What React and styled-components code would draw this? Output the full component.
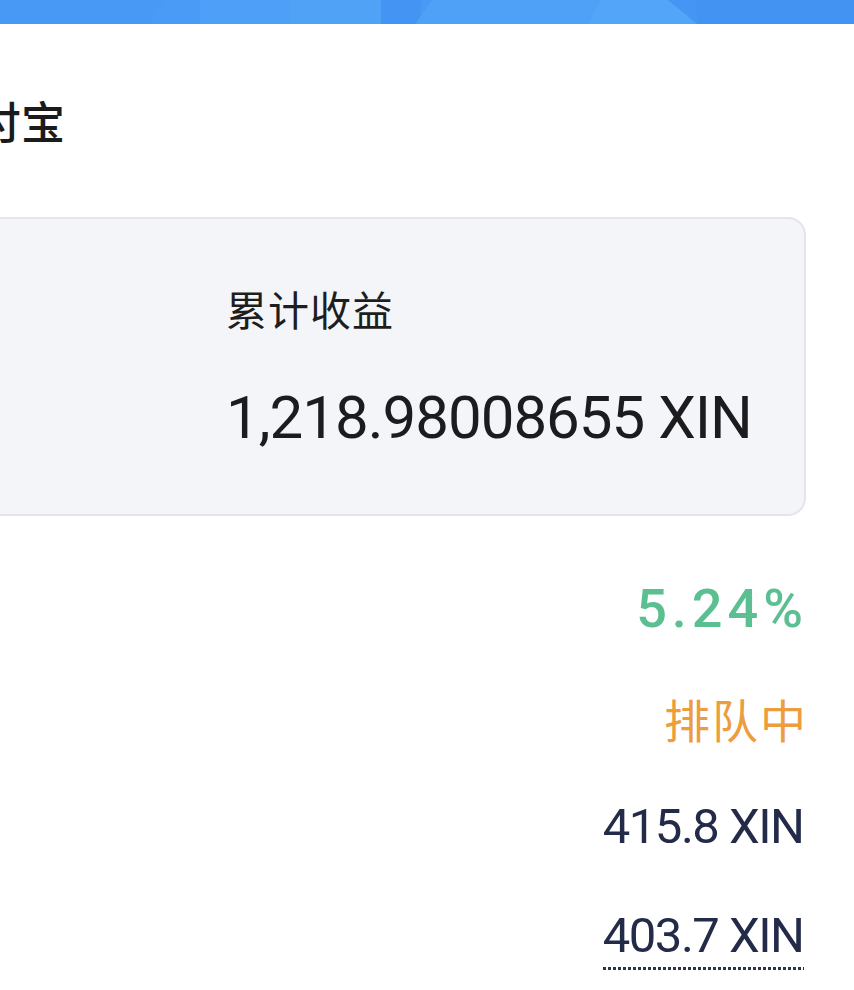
import styled, { createGlobalStyle } from "styled-components";

const GlobalStyle = createGlobalStyle`
  html, body {
    margin: 0;
    padding: 0;
    background: #ffffff;
    overflow: hidden;
  }
  body {
    font-family: "Noto Sans CJK SC", "Noto Sans", sans-serif;
    color: #1c1c1e;
  }
`;

// the capture shows the page scrolled sideways, its left part is off canvas
const SHIFT = 467;

const Root = styled.div`
  width: ${854 + SHIFT}px;
  margin-left: -${SHIFT}px;
`;

const Banner = styled.div`
  height: 24px;
  background: #4493f4;

  svg {
    display: block;
    width: 100%;
    height: 100%;
  }
`;

const Content = styled.main`
  padding: 74px 48px 0;
`;

const Title = styled.h1`
  margin: 0;
  font-size: 44px;
  line-height: 44px;
  font-weight: 500;
  color: #1b1b1b;
  white-space: nowrap;
`;

const Card = styled.section`
  margin-top: 75px;
  display: grid;
  grid-template-columns: 530px 1fr;
  column-gap: 65px;
  padding: 69px 48px 66px;
  background: #f4f5f9;
  border: 2px solid #e4e5ea;
  border-radius: 18px;
`;

const Stat = styled.div`
  display: flex;
  flex-direction: column;
  gap: 60px;
`;

const StatLabel = styled.span`
  font-size: 41px;
  line-height: 40px;
  letter-spacing: 1px;
  color: #1e1e20;
`;

const StatValue = styled.span`
  font-family: Roboto, "Noto Sans", sans-serif;
  font-size: 60px;
  line-height: 60px;
  letter-spacing: -1px;
  color: #1c1c1e;
  white-space: nowrap;
`;

const Rows = styled.div`
  margin-top: 38px;
`;

const Row = styled.div`
  height: 109px;
  display: flex;
  align-items: center;
  justify-content: space-between;
`;

const RowLabel = styled.span`
  font-size: 40px;
  color: #8a8d99;
`;

const tones = {
  green: "#5cbf92",
  orange: "#ec9d3e",
  navy: "#232b48",
};

const Value = styled.span`
  font-family: ${({ $cjk }) =>
    $cjk ? `"Noto Sans CJK SC", sans-serif` : `Roboto, "Noto Sans", sans-serif`};
  font-size: ${({ $size }) => $size}px;
  line-height: ${({ $size }) => $size}px;
  font-weight: ${({ $bold }) => ($bold ? 500 : 400)};
  letter-spacing: ${({ $spacing }) => $spacing}px;
  margin-right: ${({ $trim }) => $trim}px;
  color: ${({ $tone }) => tones[$tone]};
  white-space: nowrap;
`;

const DottedValue = styled(Value)`
  padding-bottom: 10px;
  margin-bottom: -10px;
  background-image: linear-gradient(to right, #2a3350 60%, transparent 0);
  background-size: 5px 3px;
  background-repeat: repeat-x;
  background-position: left bottom;
`;

function BannerArt() {
  const o = SHIFT;
  return (
    <svg viewBox={`0 0 ${854 + SHIFT} 24`} preserveAspectRatio="none">
      <defs>
        <linearGradient id="bn" x1="0" x2="1" y1="0" y2="0">
          <stop offset="0" stopColor="#4493f4" />
          <stop offset="0.6" stopColor="#4a9bf6" />
          <stop offset="1" stopColor="#4292f3" />
        </linearGradient>
      </defs>
      <rect width={854 + SHIFT} height="24" fill="url(#bn)" />
      <polygon points={`${o + 150},24 ${o + 166},0 ${o + 290},0 ${o + 290},24`} fill="#4a9bf6" />
      <rect x={o + 200} y="0" width="90" height="24" fill="#4d9ff7" />
      <rect x={o + 290} y="0" width="91" height="24" fill="#50a2f7" />
      <rect x={o + 381} y="0" width="40" height="24" fill="#4494f4" />
      <polygon points={`${o + 415},24 ${o + 432},0 ${o + 600},0 ${o + 588},24`} fill="#4fa1f7" />
      <polygon points={`${o + 588},24 ${o + 600},0 ${o + 668},0 ${o + 697},24`} fill="#52a5f8" />
      <rect x={o + 697} y="0" width="157" height="24" fill="#4393f3" />
    </svg>
  );
}

const rows = [
  { label: "年化收益率", text: "5.24%", tone: "green", size: 54, spacing: 5, trim: -2, bold: true },
  { label: "状态", text: "排队中", tone: "orange", size: 46, spacing: 2, trim: -2, cjk: true },
  { label: "投资金额", text: "415.8 XIN", tone: "navy", size: 49, spacing: -1.5, trim: 2.5 },
  { label: "到期金额", text: "403.7 XIN", tone: "navy", size: 49, spacing: -1.5, trim: 2.5, dotted: true },
];

export default function App() {
  return (
    <>
      <GlobalStyle />
      <Root>
        <Banner>
          <BannerArt />
        </Banner>
        <Content>
          <Title>稳定收益理财产品支付宝</Title>
          <Card>
            <Stat>
              <StatLabel>累计投入</StatLabel>
              <StatValue>8,000 XIN</StatValue>
            </Stat>
            <Stat>
              <StatLabel>累计收益</StatLabel>
              <StatValue>1,218.98008655 XIN</StatValue>
            </Stat>
          </Card>
          <Rows>
            {rows.map((r) => {
              const V = r.dotted ? DottedValue : Value;
              return (
                <Row key={r.label}>
                  <RowLabel>{r.label}</RowLabel>
                  <V
                    $tone={r.tone}
                    $size={r.size}
                    $spacing={r.spacing}
                    $trim={r.trim}
                    $bold={r.bold}
                    $cjk={r.cjk}
                  >
                    {r.text}
                  </V>
                </Row>
              );
            })}
          </Rows>
        </Content>
      </Root>
    </>
  );
}
